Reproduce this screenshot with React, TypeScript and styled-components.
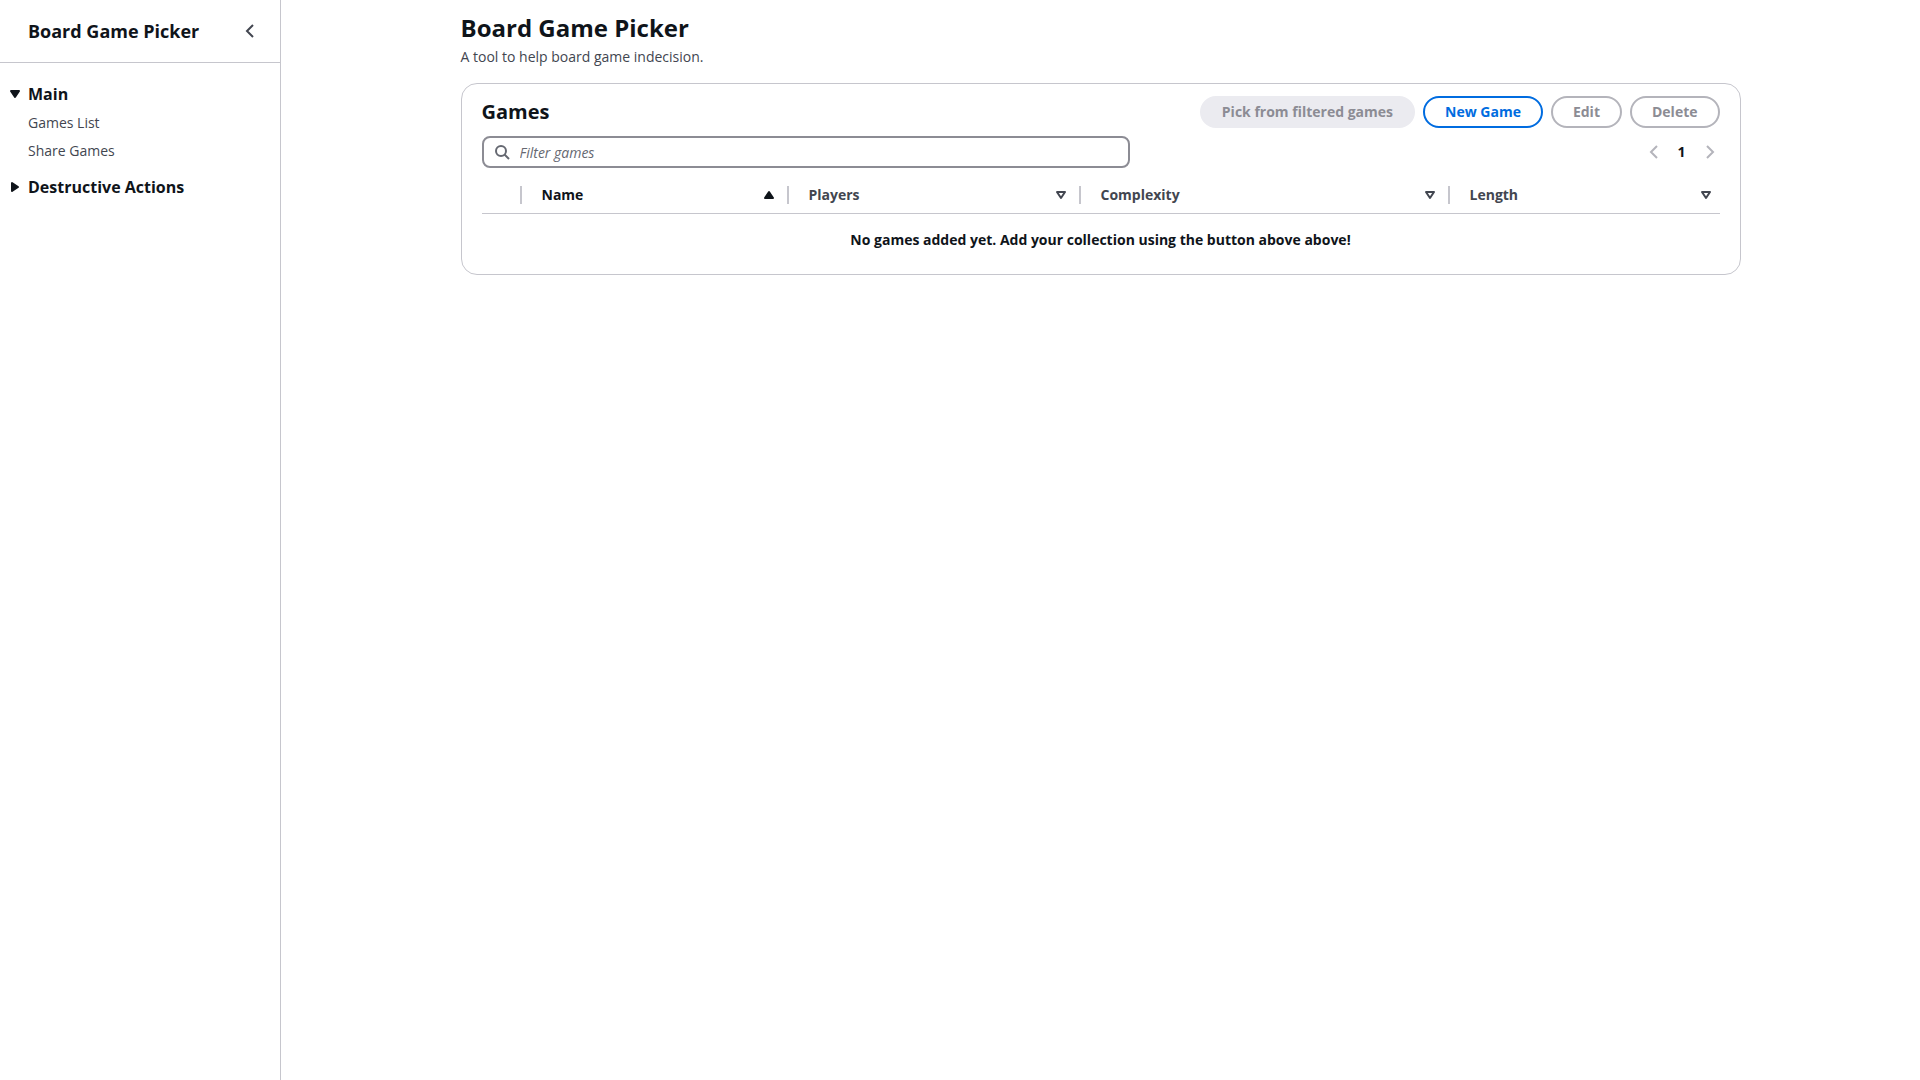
import { useState } from "react";
import styled, { createGlobalStyle } from "styled-components";

const color = {
  text: "#0f141a",
  secondary: "#424650",
  border: "#c6c6cd",
  inputBorder: "#8c8c94",
  placeholder: "#656871",
  disabledText: "#8c8c94",
  disabledBorder: "#b4b4bb",
  disabledFill: "#ebebf0",
  accent: "#006ce0",
};

const GlobalStyle = createGlobalStyle`
  *, *::before, *::after { box-sizing: border-box; }
  body {
    margin: 0;
    background: #ffffff;
    color: ${color.text};
    font-family: "Open Sans", "Noto Sans", sans-serif;
    font-size: 14px;
    line-height: 20px;
    -webkit-font-smoothing: antialiased;
  }
  h1, h2, h3, p, ul { margin: 0; padding: 0; }
  button, input { font: inherit; color: inherit; }
`;

const Layout = styled.div`
  display: flex;
  min-height: 100vh;
`;

const Sidebar = styled.nav`
  flex: 0 0 281px;
  border-right: 1px solid ${color.border};
`;

const SidebarHeader = styled.div`
  display: flex;
  align-items: center;
  justify-content: space-between;
  height: 63px;
  padding: 0 20px 0 28px;
  border-bottom: 1px solid ${color.border};
`;

const SidebarTitle = styled.a`
  color: ${color.text};
  font-size: 18px;
  font-weight: 700;
  line-height: 22px;
  text-decoration: none;
`;

const IconButton = styled.button`
  display: flex;
  align-items: center;
  justify-content: center;
  width: 20px;
  height: 24px;
  padding: 0;
  border: 0;
  background: none;
  color: ${color.secondary};
  cursor: pointer;

  &:disabled {
    color: ${color.disabledBorder};
    cursor: default;
  }
`;

const Sections = styled.div`
  display: flex;
  flex-direction: column;
  gap: 16px;
  padding: 21px 20px 20px 7px;
`;

const SectionToggle = styled.button`
  display: flex;
  align-items: center;
  gap: 5px;
  padding: 0;
  border: 0;
  background: none;
  font-size: 16px;
  font-weight: 700;
  line-height: 20px;
  cursor: pointer;
`;

const SectionLinks = styled.ul`
  display: flex;
  flex-direction: column;
  gap: 8px;
  padding: 9px 0 0 21px;
  list-style: none;
`;

const SectionLink = styled.a`
  color: ${color.secondary};
  text-decoration: none;
`;

const Main = styled.main`
  flex: 1;
  min-width: 0;
  padding: 12px 40px 40px;
`;

const Content = styled.div`
  max-width: 1280px;
  margin: 0 auto;
`;

const PageTitle = styled.h1`
  font-size: 24px;
  line-height: 32px;
`;

const Description = styled.p`
  padding: 3px 0 16px;
  color: ${color.secondary};
`;

const Card = styled.section`
  padding: 12px 20px 0;
  border: 1px solid ${color.border};
  border-radius: 16px;
`;

const Row = styled.div`
  display: flex;
  align-items: center;
  justify-content: space-between;
  gap: 20px;
  margin-bottom: 8px;
`;

const CardTitle = styled.h2`
  font-size: 20px;
  line-height: 24px;
`;

const Actions = styled.div`
  display: flex;
  gap: 8px;
`;

const Button = styled.button<{ $primary?: boolean }>`
  height: 32px;
  padding: 0 20px;
  border: 2px solid ${color.accent};
  border-radius: 20px;
  background: #ffffff;
  color: ${color.accent};
  font-weight: 700;
  line-height: 20px;
  white-space: nowrap;
  cursor: pointer;

  &:disabled {
    border-color: ${(p) => (p.$primary ? color.disabledFill : color.disabledBorder)};
    background: ${(p) => (p.$primary ? color.disabledFill : "#ffffff")};
    color: ${color.disabledText};
    cursor: default;
  }
`;

const Filter = styled.label`
  display: flex;
  align-items: center;
  flex: 0 1 648px;
  gap: 10px;
  height: 32px;
  padding: 0 10px;
  border: 2px solid ${color.inputBorder};
  border-radius: 8px;
  color: ${color.placeholder};
`;

const FilterInput = styled.input`
  flex: 1;
  min-width: 0;
  padding: 2px 0 0;
  border: 0;
  outline: 0;
  background: none;
  color: ${color.text};

  &::placeholder {
    color: ${color.placeholder};
    font-style: italic;
    opacity: 1;
  }
`;

const Pagination = styled.div`
  display: flex;
  align-items: center;
  gap: 8px;
`;

const PageNumber = styled.button`
  width: 20px;
  padding: 0;
  border: 0;
  background: none;
  font-weight: 700;
`;

const Table = styled.table`
  width: 100%;
  border-collapse: separate;
  border-spacing: 0;
  table-layout: fixed;
`;

const Column = styled.col<{ $width?: number }>`
  width: ${(p) => (p.$width ? `${p.$width}px` : "auto")};
`;

const HeadCell = styled.th`
  height: 38px;
  padding: 0;
  border-bottom: 1px solid ${color.border};
  text-align: left;
`;

const HeadContent = styled.div<{ $divider: boolean }>`
  display: flex;
  align-items: center;
  height: 18px;
  border-right: ${(p) => (p.$divider ? `2px solid ${color.border}` : "0")};
`;

const SortButton = styled.button<{ $active: boolean; $last: boolean }>`
  display: flex;
  flex: 1;
  align-items: center;
  justify-content: space-between;
  padding: 0 ${(p) => (p.$last ? 6 : 10)}px 0 20px;
  border: 0;
  background: none;
  color: ${(p) => (p.$active ? color.text : color.secondary)};
  font-weight: 700;
  line-height: 20px;
  cursor: pointer;
`;

const EmptyCell = styled.td`
  padding: 16px 0 24px;
  font-weight: 700;
  text-align: center;
`;

const Icon = styled.svg`
  display: block;
  flex: none;
  width: 16px;
  height: 16px;
  fill: none;
  stroke: currentColor;
  stroke-width: 2;
`;

const Chevron = ({ right }: { right?: boolean }) => (
  <Icon viewBox="0 0 16 16" aria-hidden="true">
    <path d={right ? "M5 2l6 6-6 6" : "M11 2L5 8l6 6"} />
  </Icon>
);

const Search = () => (
  <Icon viewBox="0 0 16 16" aria-hidden="true">
    <circle cx="7" cy="7" r="5" />
    <path d="M15 15l-4.5-4.5" />
  </Icon>
);

const CARETS = {
  down: "M4 5h8l-4 6-4-6z",
  right: "M5 4v8l6-4-6-4z",
  up: "M4 11h8L8 5l-4 6z",
};

const Caret = ({ direction, hollow }: { direction: keyof typeof CARETS; hollow?: boolean }) => (
  <Icon viewBox="0 0 16 16" aria-hidden="true">
    <path d={CARETS[direction]} fill={hollow ? "none" : "currentColor"} strokeLinejoin="round" />
  </Icon>
);

function Section({ title, links, initiallyOpen = false }: { title: string; links: string[]; initiallyOpen?: boolean }) {
  const [open, setOpen] = useState(initiallyOpen);
  return (
    <div>
      <SectionToggle aria-expanded={open} onClick={() => setOpen(!open)}>
        <Caret direction={open ? "down" : "right"} />
        {title}
      </SectionToggle>
      {open && (
        <SectionLinks>
          {links.map((link) => (
            <li key={link}>
              <SectionLink href="#">{link}</SectionLink>
            </li>
          ))}
        </SectionLinks>
      )}
    </div>
  );
}

const COLUMNS = [
  { name: "Name", width: 267 },
  { name: "Players", width: 292 },
  { name: "Complexity", width: 369 },
  { name: "Length" },
];

export default function App() {
  const [filter, setFilter] = useState("");
  return (
    <Layout>
      <GlobalStyle />
      <Sidebar>
        <SidebarHeader>
          <SidebarTitle href="#">Board Game Picker</SidebarTitle>
          <IconButton aria-label="Close navigation">
            <Chevron />
          </IconButton>
        </SidebarHeader>
        <Sections>
          <Section title="Main" links={["Games List", "Share Games"]} initiallyOpen />
          <Section title="Destructive Actions" links={[]} />
        </Sections>
      </Sidebar>
      <Main>
        <Content>
          <PageTitle>Board Game Picker</PageTitle>
          <Description>A tool to help board game indecision.</Description>
          <Card>
            <Row>
              <CardTitle>Games</CardTitle>
              <Actions>
                <Button $primary disabled>Pick from filtered games</Button>
                <Button>New Game</Button>
                <Button disabled>Edit</Button>
                <Button disabled>Delete</Button>
              </Actions>
            </Row>
            <Row>
              <Filter>
                <Search />
                <FilterInput
                  type="text"
                  aria-label="Filter games"
                  placeholder="Filter games"
                  value={filter}
                  onChange={(e) => setFilter(e.target.value)}
                />
              </Filter>
              <Pagination>
                <IconButton aria-label="Previous page" disabled>
                  <Chevron />
                </IconButton>
                <PageNumber aria-current="page">1</PageNumber>
                <IconButton aria-label="Next page" disabled>
                  <Chevron right />
                </IconButton>
              </Pagination>
            </Row>
            <Table>
              <colgroup>
                <Column $width={40} />
                {COLUMNS.map((c) => (
                  <Column key={c.name} $width={c.width} />
                ))}
              </colgroup>
              <thead>
                <tr>
                  <HeadCell aria-label="Selection">
                    <HeadContent $divider />
                  </HeadCell>
                  {COLUMNS.map((c, i) => {
                    const last = i === COLUMNS.length - 1;
                    return (
                      <HeadCell key={c.name}>
                        <HeadContent $divider={!last}>
                          <SortButton $active={i === 0} $last={last}>
                            {c.name}
                            <Caret direction={i === 0 ? "up" : "down"} hollow={i !== 0} />
                          </SortButton>
                        </HeadContent>
                      </HeadCell>
                    );
                  })}
                </tr>
              </thead>
              <tbody>
                <tr>
                  <EmptyCell colSpan={5}>No games added yet. Add your collection using the button above above!</EmptyCell>
                </tr>
              </tbody>
            </Table>
          </Card>
        </Content>
      </Main>
    </Layout>
  );
}
